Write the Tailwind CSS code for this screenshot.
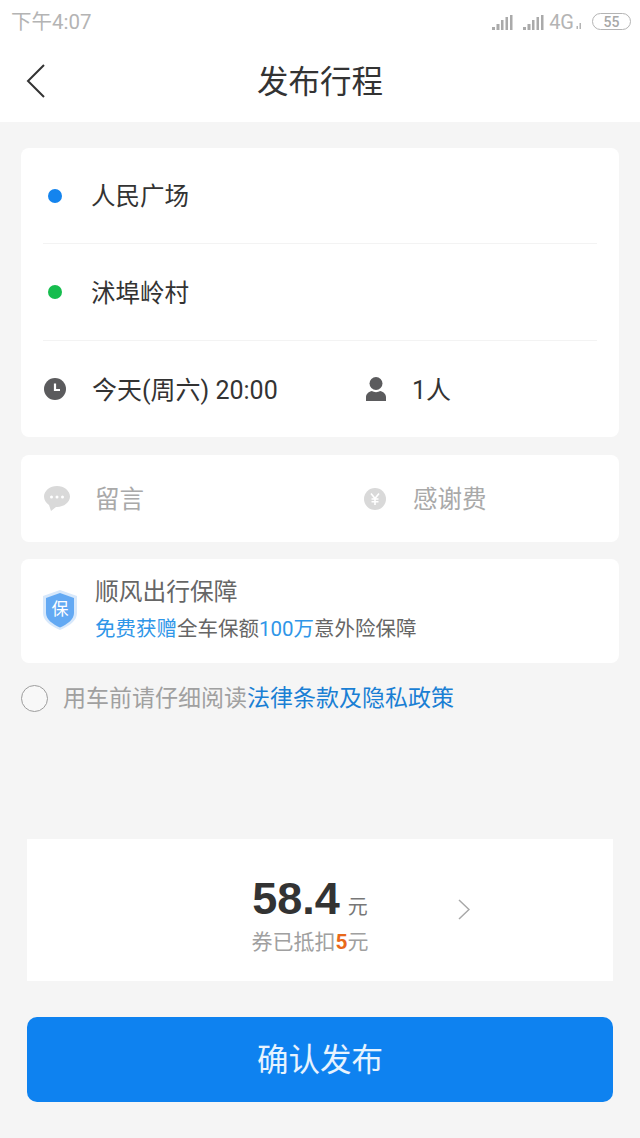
<!DOCTYPE html>
<html lang="zh-CN">
  <head>
    <meta charset="UTF-8" />
    <meta name="viewport" content="width=device-width, initial-scale=1.0" />
    <title>发布行程</title>
    <script src="https://cdn.jsdelivr.net/npm/@tailwindcss/browser@4"></script>
  </head>
  <body class="bg-[#f5f5f5] font-['Roboto','Noto_Sans_CJK_SC',sans-serif]">
    <div class="w-[640px] h-[1138px] flex flex-col overflow-hidden">
      <!-- status bar + title -->
      <div class="bg-white h-[122px] shrink-0">
        <div class="h-[44px] pl-[11px] pr-[9px] flex items-center justify-between text-[#b4b4b4]">
          <span class="text-[20.500px] leading-none">下午4:07</span>
          <div class="flex items-center -mt-[1px]">
            <svg width="24" height="18" viewBox="0 0 24 18" fill="#aaa"><rect x="1" y="14" width="3" height="3"/><rect x="5.500" y="11" width="3" height="6"/><rect x="10" y="7" width="2.500" height="10"/><rect x="14.500" y="4" width="2.500" height="13"/><rect x="19" y="2" width="2.500" height="15"/></svg>
            <svg class="ml-[7px]" width="24" height="18" viewBox="0 0 24 18" fill="#aaa"><rect x="1" y="14" width="3" height="3"/><rect x="5.500" y="11" width="3" height="6"/><rect x="10" y="7" width="2.500" height="10"/><rect x="14.500" y="4" width="2.500" height="13"/><rect x="19" y="2" width="2.500" height="15"/></svg>
            <span class="ml-[3px] text-[20px] leading-none">4G</span>
            <svg class="ml-[2px] mt-[8px]" width="6" height="6" viewBox="0 0 6 6" fill="#b4b4b4"><rect x="0.500" y="3" width="1.500" height="3"/><rect x="3.500" y="0" width="1.500" height="6"/></svg>
            <span class="ml-[10px] w-[39px] h-[17px] rounded-full border border-[#b4b4b4] flex items-center justify-center text-[14px] leading-none font-medium text-[#a8a8a8]">55</span>
          </div>
        </div>
        <div class="relative h-[78px] flex items-center justify-center">
          <svg class="absolute left-[26px] top-[19px]" width="20" height="36" viewBox="0 0 20 36" fill="none" stroke="#333" stroke-width="2"><path d="M18 2 2 18l16 16"/></svg>
          <h1 class="text-[31.500px] leading-none text-[#333] -mt-[1px]">发布行程</h1>
        </div>
      </div>

      <main class="flex-1 flex flex-col px-[21px] pt-[26px]">
        <!-- route card -->
        <section class="bg-white rounded-[8px] h-[289px] px-[22px] flex flex-col">
          <div class="h-[96px] flex items-center border-b border-[#f3f3f3]">
            <span class="w-[14px] h-[14px] rounded-full bg-[#1484ee] ml-[5px]"></span>
            <span class="ml-[29px] pt-[4px] text-[24.500px] text-[#333] leading-none">人民广场</span>
          </div>
          <div class="h-[97px] flex items-center border-b border-[#f3f3f3]">
            <span class="w-[14px] h-[14px] rounded-full bg-[#16bd4e] ml-[5px]"></span>
            <span class="ml-[29px] pt-[4px] text-[24.500px] text-[#333] leading-none">沭埠岭村</span>
          </div>
          <div class="flex-1 flex items-center">
            <div class="w-[322px] flex items-center">
              <svg class="ml-[1px]" width="22" height="22" viewBox="0 0 22 22"><circle cx="11" cy="11" r="11" fill="#5b5b5d"/><path d="M11 5.500v6.500h5" fill="none" stroke="#fff" stroke-width="2.200"/></svg>
              <span class="ml-[26px] pt-[2px] text-[25px] text-[#333] leading-none">今天(周六) 20:00</span>
            </div>
            <svg width="22" height="24" viewBox="0 0 22 24" fill="#5b5b5d"><ellipse cx="11" cy="6.500" rx="6.500" ry="6.500"/><path d="M1 24v-4c0-3 3-5.500 6-6 2 1.500 6 1.500 8 0 3 .5 6 3 6 6v4z"/></svg>
            <span class="ml-[25px] pt-[2px] text-[25px] text-[#333] leading-none">1人</span>
          </div>
        </section>

        <!-- message + thanks fee -->
        <section class="mt-[18px] bg-white rounded-[8px] h-[87px] px-[23px] flex items-center text-[24.500px] text-[#a9a9a9] leading-none">
          <div class="w-[320px] flex items-center">
            <svg width="26" height="26" viewBox="0 0 26 26"><path d="M13 0C6 0 0 4.700 0 10.500c0 3.500 2 6.500 5 8.400L7 25l5-4.100h1c7 0 13-4.600 13-10.400S20 0 13 0z" fill="#d9d9d9"/><circle cx="7.500" cy="11" r="1.500" fill="#fff"/><circle cx="13" cy="11" r="1.500" fill="#fff"/><circle cx="18.500" cy="11" r="1.500" fill="#fff"/></svg>
            <span class="ml-[25px] pt-[4px]">留言</span>
          </div>
          <svg width="22" height="22" viewBox="0 0 22 22"><circle cx="11" cy="11" r="11" fill="#d9d9d9"/><path d="M7 5.500l4 5 4-5M11 10.500V17M7.500 11h7M7.500 13.800h7" fill="none" stroke="#fff" stroke-width="1.600"/></svg>
          <span class="ml-[27px] pt-[4px]">感谢费</span>
        </section>

        <!-- insurance -->
        <section class="mt-[17px] bg-white rounded-[8px] h-[104px] pl-[22px] flex items-center">
          <svg class="-ml-[1px] -mt-[2px]" width="36" height="42" viewBox="0 0 36 42"><path d="M18 1 35 7v17c0 8-8 13-17 17C9 37 1 32 1 24V7z" fill="#d7e8fb"/><path d="M18 4 32 9v15c0 6.500-6.500 11-14 14.500C10.500 35 4 30.500 4 24V9z" fill="#63a9f3"/><text x="18" y="26" text-anchor="middle" font-size="17" fill="#fff">保</text></svg>
          <div class="ml-[17px] flex flex-col -mt-[2px]">
            <span class="text-[23.750px] leading-none text-[#666]">顺风出行保障</span>
            <span class="mt-[14px] text-[20.500px] leading-none text-[#666]"><span class="text-[#2f96e8]">免费获赠</span>全车保额<span class="text-[#2f96e8]">100万</span>意外险保障</span>
          </div>
        </section>

        <!-- agreement -->
        <div class="mt-[22px] flex items-center">
          <span class="w-[27px] h-[27px] rounded-full border border-[#9d9d9d] bg-[#f8f8f8]"></span>
          <span class="ml-[15px] text-[23px] leading-none text-[#a0a0a0]">用车前请仔细阅读<span class="text-[#1a7fd4]">法律条款及隐私政策</span></span>
        </div>

        <!-- price -->
        <section class="mt-[127px] mx-[6px] bg-white h-[142px] relative flex flex-col items-center pr-[20px]">
          <div class="mt-[37px] flex items-baseline">
            <span class="font-['Liberation_Sans'] text-[45px] leading-none font-bold text-[#333]">58.4</span>
            <span class="ml-[8px] text-[20px] leading-none text-[#777]">元</span>
          </div>
          <span class="mt-[11px] text-[21px] leading-none text-[#a0a0a0]">券已抵扣<span class="text-[#e8681a] font-bold">5</span>元</span>
          <svg class="absolute left-[431px] top-[60px]" width="12" height="21" viewBox="0 0 12 21" fill="none" stroke="#a8a8a8" stroke-width="1.500"><path d="m1 1 10 9.500L1 20"/></svg>
        </section>

        <button class="mt-[36px] mx-[6px] h-[85px] pt-[3px] rounded-[10px] bg-[#0e82f0] text-white/90 text-[31.500px] leading-none">确认发布</button>
      </main>
    </div>
  </body>
</html>
